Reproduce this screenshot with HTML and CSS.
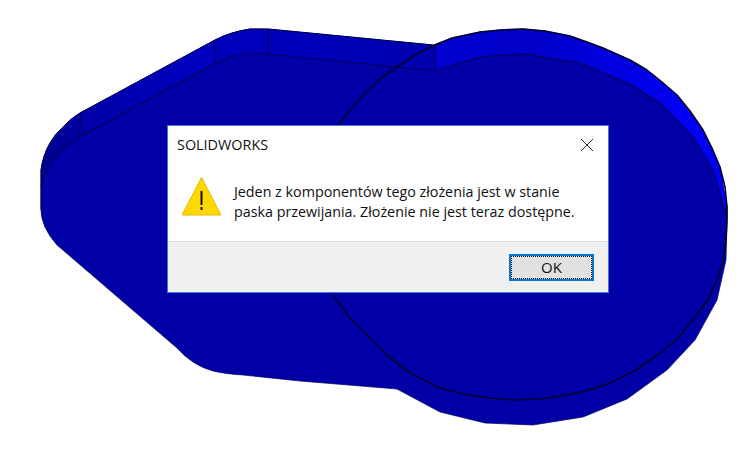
FILE: index.html
```html
<!DOCTYPE html>
<html lang="en">
<head>
	<meta charset="UTF-8">
	<title>SOLIDWORKS</title>
	<link rel="stylesheet" href="styles.css">
</head>
<body>
	<div class="viewport">
		<svg class="model" width="755" height="450" viewBox="0 0 755 450">
			<defs>
				<linearGradient id="bandLeft" gradientUnits="userSpaceOnUse" x1="41" y1="0" x2="435" y2="0">
					<stop offset="0" stop-color="#000090"/>
					<stop offset="0.12" stop-color="#0000a8"/>
					<stop offset="0.4" stop-color="#0000c0"/>
					<stop offset="1" stop-color="#0000b0"/>
				</linearGradient>
				<linearGradient id="bandRight" gradientUnits="userSpaceOnUse" x1="435" y1="0" x2="680" y2="0">
					<stop offset="0" stop-color="#0000d0"/>
					<stop offset="0.4" stop-color="#0000c8"/>
					<stop offset="0.8" stop-color="#0000e4"/>
					<stop offset="1" stop-color="#0000f4"/>
				</linearGradient>
			</defs>
			<!-- silhouette -->
			<path class="rim" d="M41 187 L41 170 Q43 155 50 143 Q55 134 63 127 Q70 119 80 113 L215 40 Q230 32 250 29 L268 29 L433 45 L452 38 L480 32 L500 30 L523 29 L545 31 L570 36 L603 48 L630 60 L647 70 L677 95 L703 130 L720 167 L727 207 L727 220 L726 260 L717 300 L695 340 L667 370 L627 399 L583 417 L533 425 L485 423 L440 412 L397 389 L300 381 L243 375 Q225 374 213 371 Q202 368 193 362 Q184 356 177 348 L57 245 Q49 236 45 227 Q41 218 41 210 Z"/>
			<!-- chamfer band, top edge -->
			<path class="band" d="M41 187 L41 170 Q43 155 50 143 Q55 134 63 127 Q70 119 80 113 L215 40 Q230 32 250 29 L268 29 L433 45 L435 71 L397 67 L268 54 L250 54 Q238 54 230 57 L215 63 L80 137 Q70 142 63 148 Q55 155 50 163 Q44 174 41 187 Z"/>
			<path class="band-right" d="M435 46 L452 38 L480 32 L500 30 L523 29 L545 31 L570 36 L603 48 L630 60 L647 70 L677 95 L703 130 L720 167 L727 207 L726 215 L713 170 L693 137 L660 103 L630 84 L580 63 L560 60 L527 54 L505 55 L480 57 L435 71 Z"/>
			<!-- face -->
			<path class="edge" d="M41 187 Q44 174 50 163 Q55 155 63 148 Q70 142 80 137 L215 63 L230 57 Q238 54 250 54 L268 54 L397 67 L435 71 L480 57 L505 55 L527 54 L560 60 L580 63 L630 84 L660 103 L693 137 L713 170 L726 215"/>
			<path class="edge" d="M80 113 L80 137 M215 40 L215 63 M268 29 L268 54 M435 46 L435 71"/>
			<path class="outline" d="M41 210 L41 170 Q43 155 50 143 Q55 134 63 127 Q70 119 80 113 L215 40 Q230 32 250 29 L268 29 L433 45"/>
			<polyline class="circle" points="338,125 352,108 365,93 380,79 397,67 415,55 433,46 452,38 480,32 500,30 523,29 545,31 570,36 587,42 603,48 630,60 647,70 662,82 677,95 690,111 703,130 712,148 720,167 725,187 727,207 727,220 726,240 723,261 717,280 707,301 693,320 678,338 660,353 636,370 610,383 586,391 560,396 540,399 513,400 490,398 467,395 440,388 410,373 387,355 367,335 350,318 333,295"/>
		</svg>

		<div class="dialog">
			<div class="dialog-head">
				<span class="dialog-title">SOLIDWORKS</span>
				<svg class="dialog-close" width="14" height="14" viewBox="0 0 14 14">
					<path d="M1 1 L13 13 M13 1 L1 13"/>
				</svg>
			</div>
			<div class="dialog-body">
				<svg class="warn-icon" width="42" height="42" viewBox="0 0 42 42">
					<path class="warn-tri" d="M20.5 1.5 L40 39 L1 39 Z"/>
					<rect class="warn-mark" x="19.5" y="15" width="2" height="14"/>
					<rect class="warn-mark" x="19.5" y="31" width="2" height="3"/>
				</svg>
				<p class="dialog-msg">Jeden z komponentów tego złożenia jest w stanie<br>paska przewijania. Złożenie nie jest teraz dostępne.</p>
			</div>
			<div class="dialog-foot">
				<button class="btn-ok">OK</button>
			</div>
		</div>
	</div>
</body>
</html>
```

FILE: styles.css
```css
* {
	padding: 0;
	margin: 0;
	box-sizing: border-box;
}
body {
	background-color: #fff;
	font-family: "Open Sans", "Noto Sans", sans-serif;
	color: #111;
}
.viewport {
	position: relative;
	width: 755px;
	height: 450px;
	overflow: hidden;
}
.model {
	position: absolute;
	left: 0;
	top: 0;
}
.rim {
	fill: #0000a6;
	stroke: #00005a;
	stroke-width: 0.7;
}
.band {
	fill: url(#bandLeft);
}
.band-right {
	fill: url(#bandRight);
}
.edge {
	fill: none;
	stroke: #000058;
	stroke-width: 1.2;
}
.outline {
	fill: none;
	stroke: #000050;
	stroke-width: 1;
}
.circle {
	fill: none;
	stroke: #00002c;
	stroke-width: 1.6;
	stroke-linejoin: round;
}
.dialog {
	position: absolute;
	left: 167px;
	top: 125px;
	width: 442px;
	height: 168px;
	display: flex;
	flex-direction: column;
	border: 1px solid #4079d9;
	background-color: #fff;
}
.dialog-head {
	display: flex;
	justify-content: space-between;
	align-items: center;
	height: 37px;
	padding: 0 14px 0 9px;
}
.dialog-title {
	font-size: 14.4px;
}
.dialog-close path {
	fill: none;
	stroke: #222;
	stroke-width: 1;
}
.dialog-body {
	flex: 1;
	display: flex;
	align-items: flex-start;
	gap: 11px;
	padding: 13px 0 0 13px;
}
.warn-tri {
	fill: #ffd800;
	stroke: #eab700;
	stroke-width: 1;
}
.warn-mark {
	fill: #111;
}
.dialog-msg {
	font-size: 14.3px;
	line-height: 20px;
	padding-top: 6px;
}
.dialog-foot {
	display: flex;
	justify-content: flex-end;
	align-items: center;
	height: 51px;
	padding-right: 14px;
	border-top: 1px solid #dfdfdf;
	background-color: #f0f0f0;
}
.btn-ok {
	width: 85px;
	height: 27px;
	border: 2px solid #0078d7;
	outline: 1px dotted #111;
	outline-offset: -3px;
	background-color: #e1e1e1;
	font-family: inherit;
	font-size: 15px;
	color: #111;
}
```
